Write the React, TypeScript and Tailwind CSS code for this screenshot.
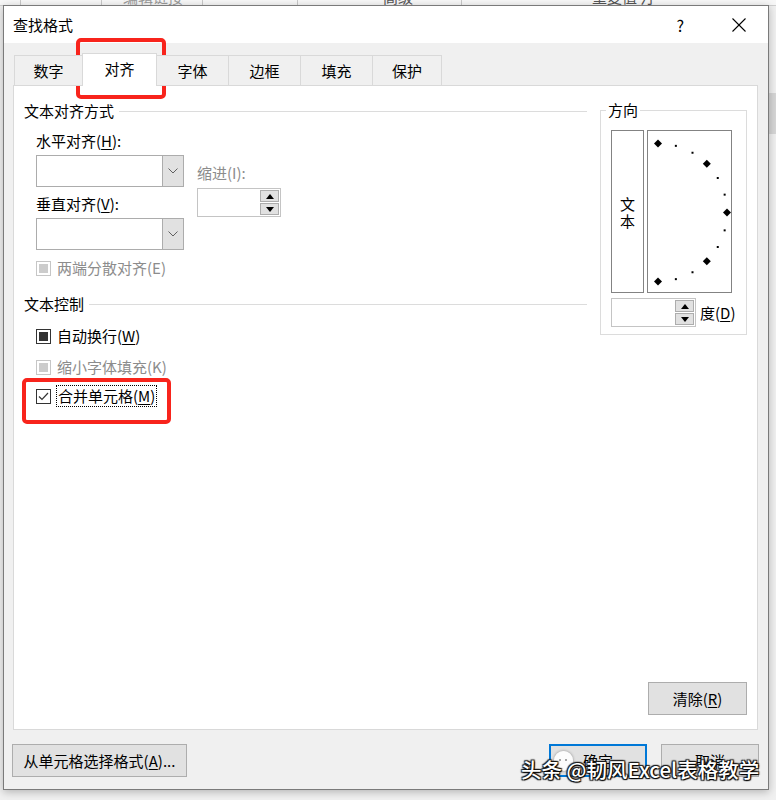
import React from "react";

const FONT = "font-['Noto_Sans_CJK_SC','Microsoft_YaHei',sans-serif]";

function Chevron() {
  return (
    <svg width="10" height="6" viewBox="0 0 10 6">
      <polyline points="0.5,0.5 5,5 9.5,0.5" fill="none" stroke="#606060" strokeWidth="1" />
    </svg>
  );
}

function Combo() {
  return (
    <div className="flex h-[32px] w-[148px] border border-[#acacac] bg-white">
      <div className="flex-1" />
      <div className="flex w-[21px] items-center justify-center border-l border-[#acacac] bg-[#e1e1e1]">
        <Chevron />
      </div>
    </div>
  );
}

function Tri({ up }: { up: boolean }) {
  return (
    <svg width="8" height="5" viewBox="0 0 8 5">
      <polygon points={up ? "4,0 8,5 0,5" : "0,0 8,0 4,5"} fill="#000" />
    </svg>
  );
}

function Spin({ className }: { className: string }) {
  return (
    <div className={className}>
      <div className="flex-1" />
      <div className="flex w-[19px] flex-col gap-px">
        <div className="flex flex-1 items-center justify-center border border-[#adadad] bg-[#e1e1e1]">
          <Tri up />
        </div>
        <div className="flex flex-1 items-center justify-center border border-[#adadad] bg-[#e1e1e1]">
          <Tri up={false} />
        </div>
      </div>
    </div>
  );
}

function Legend({ text }: { text: string }) {
  return (
    <div className="flex h-[20px] items-center gap-[5px]">
      <span className="text-[15px] leading-[20px] text-black">{text}</span>
      <div className="h-px flex-1 bg-[#dcdcdc]" />
    </div>
  );
}

function Tab({ label, className }: { label: string; className: string }) {
  return (
    <div className={className}>
      <span className="text-[15px] leading-[20px] text-black">{label}</span>
    </div>
  );
}

function Btn({ label, acc, rest, className }: { label: string; acc: string; rest: string; className: string }) {
  return (
    <div className={className}>
      <span className="text-[15px] leading-[20px] text-black">
        {label}(<span className="underline underline-offset-2">{acc}</span>){rest}
      </span>
    </div>
  );
}

const dial = (() => {
  const cx = 10;
  const cy = 81.5;
  const r = 69;
  const pts: { x: number; y: number; big: boolean }[] = [];
  for (let a = 90; a >= -90; a -= 15) {
    const rad = (a * Math.PI) / 180;
    pts.push({ x: cx + r * Math.cos(rad), y: cy - r * Math.sin(rad), big: a % 45 === 0 });
  }
  return pts;
})();

export default function App() {
  return (
    <div className={`relative h-[800px] w-[776px] overflow-hidden bg-[#f0f0f0] ${FONT}`}>
      {/* background excel ribbon strip */}
      <div className="absolute left-0 top-0 h-[6px] w-[776px] border-b border-[#cfcfcf] bg-[#f7f7f7]">
        <div className="absolute left-[20px] top-0 h-[6px] w-px bg-[#c8c8c8]" />
        <div className="absolute left-[101px] top-0 h-[6px] w-px bg-[#c8c8c8]" />
        <div className="absolute left-[202px] top-0 h-[6px] w-px bg-[#c8c8c8]" />
        <div className="absolute left-[297px] top-0 h-[6px] w-px bg-[#c8c8c8]" />
        <div className="absolute left-[461px] top-0 h-[6px] w-px bg-[#c8c8c8]" />
        <span className="absolute left-[123px] top-[-14px] text-[15px] text-[#9a9a9a]">编辑链接</span>
        <span className="absolute left-[383px] top-[-14px] text-[15px] text-[#555]">高级</span>
        <span className="absolute left-[592px] top-[-14px] text-[15px] text-[#555]">重复值 汀</span>
      </div>
      <div className="absolute right-0 top-[93px] h-[41px] w-[8px] bg-[#d6d6d6]" />

      {/* dialog */}
      <div className="absolute left-[3px] top-[5px] flex h-[785px] w-[766px] flex-col border border-[#7a7a7a] bg-[#f0f0f0] shadow-[0_2px_8px_rgba(0,0,0,0.25)]">
        {/* title bar */}
        <div className="flex h-[37px] items-center bg-white pl-[9px]">
          <span className="text-[15px] leading-[20px] text-black">查找格式</span>
          <div className="flex-1" />
          <span className="mr-[48px] text-[16px] leading-[20px] text-black">?</span>
          <svg width="14" height="14" viewBox="0 0 14 14" className="mr-[22px]">
            <line x1="0.5" y1="0.5" x2="13.5" y2="13.5" stroke="#000" strokeWidth="1.1" />
            <line x1="13.5" y1="0.5" x2="0.5" y2="13.5" stroke="#000" strokeWidth="1.1" />
          </svg>
        </div>

        {/* tabs */}
        <div className="relative z-10 -mb-px ml-[10px] mt-[10px] flex h-[33px] items-end">
          <Tab label="数字" className="flex h-[31px] w-[68px] items-center justify-center border-l border-t border-b border-[#d9d9d9] bg-[#f0f0f0]" />
          <Tab label="对齐" className="flex h-[33px] w-[75px] items-center justify-center border-l border-r border-t border-[#d9d9d9] bg-white pb-[2px]" />
          <Tab label="字体" className="flex h-[31px] w-[71px] items-center justify-center border-t border-b border-[#d9d9d9] bg-[#f0f0f0]" />
          <Tab label="边框" className="flex h-[31px] w-[72px] items-center justify-center border-l border-t border-b border-[#d9d9d9] bg-[#f0f0f0]" />
          <Tab label="填充" className="flex h-[31px] w-[72px] items-center justify-center border-l border-t border-b border-[#d9d9d9] bg-[#f0f0f0]" />
          <Tab label="保护" className="flex h-[31px] w-[70px] items-center justify-center border-l border-r border-t border-b border-[#d9d9d9] bg-[#f0f0f0]" />
        </div>

        {/* panel */}
        <div className="ml-[9px] flex h-[645px] w-[745px] flex-col border border-[#d9d9d9] bg-white">
          <div className="flex">
            {/* left column */}
            <div className="flex w-[573px] flex-col pl-[10px] pt-[15px]">
              <Legend text="文本对齐方式" />
              <div className="ml-[12px] flex">
                <div className="flex w-[148px] flex-col">
                  <div className="mt-[10px] h-[20px] text-[15px] leading-[20px] text-black">
                    水平对齐(<span className="underline underline-offset-2">H</span>):
                  </div>
                  <div className="mt-[4px]">
                    <Combo />
                  </div>
                  <div className="mt-[7px] h-[20px] text-[15px] leading-[20px] text-black">
                    垂直对齐(<span className="underline underline-offset-2">V</span>):
                  </div>
                  <div className="mt-[4px]">
                    <Combo />
                  </div>
                </div>
                <div className="ml-[13px] flex flex-col">
                  <div className="mt-[42px] h-[20px] text-[15px] leading-[20px] text-[#8c8c8c]">缩进(I):</div>
                  <Spin className="mt-[5px] flex h-[29px] w-[84px] border border-[#c4c4c4] bg-white p-px" />
                </div>
              </div>
              <div className="ml-[12px] mt-[8px] flex h-[20px] items-center gap-[6px]">
                <div className="flex h-[15px] w-[15px] items-center justify-center border border-[#c6c6c6] bg-white">
                  <div className="h-[9px] w-[9px] bg-[#cccccc]" />
                </div>
                <span className="text-[15px] leading-[20px] text-[#8c8c8c]">两端分散对齐(E)</span>
              </div>

              <div className="mt-[16px]">
                <Legend text="文本控制" />
              </div>
              <div className="ml-[12px] mt-[12px] flex h-[20px] items-center gap-[6px]">
                <div className="flex h-[15px] w-[15px] items-center justify-center border border-[#333] bg-white">
                  <div className="h-[9px] w-[9px] bg-[#333]" />
                </div>
                <span className="text-[15px] leading-[20px] text-black">
                  自动换行(<span className="underline underline-offset-2">W</span>)
                </span>
              </div>
              <div className="ml-[12px] mt-[11px] flex h-[20px] items-center gap-[6px]">
                <div className="flex h-[15px] w-[15px] items-center justify-center border border-[#c6c6c6] bg-white">
                  <div className="h-[9px] w-[9px] bg-[#cccccc]" />
                </div>
                <span className="text-[15px] leading-[20px] text-[#8c8c8c]">缩小字体填充(K)</span>
              </div>
              <div className="ml-[12px] mt-[8px] flex h-[22px] items-center gap-[5px]">
                <div className="flex h-[15px] w-[15px] items-center justify-center border border-[#333] bg-white">
                  <svg width="13" height="13" viewBox="0 0 13 13">
                    <polyline points="2,6.5 5,9.5 11,3" fill="none" stroke="#333" strokeWidth="1.2" />
                  </svg>
                </div>
                <span className="border border-dotted border-black px-px text-[15px] leading-[20px] text-black">
                  合并单元格(<span className="underline underline-offset-2">M</span>)
                </span>
              </div>
            </div>

            {/* right group: 方向 */}
            <div className="relative ml-[13px] mt-[24px] flex h-[225px] w-[147px] flex-col border border-[#dcdcdc] pl-[10px] pt-[19px]">
              <span className="absolute left-[5px] top-[-11px] bg-white px-[2px] text-[15px] leading-[20px] text-black">方向</span>
              <div className="flex gap-[3px]">
                <div className="flex h-[163px] w-[33px] flex-col items-center justify-center border border-[#838383] text-[15px] leading-[17px] text-black">
                  <span>文</span>
                  <span>本</span>
                </div>
                <div className="h-[163px] w-[85px] border border-[#838383]">
                  <svg width="83" height="161" viewBox="0 0 83 161">
                    {dial.map((p, i) =>
                      p.big ? (
                        <polygon
                          key={i}
                          points={`${p.x},${p.y - 4} ${p.x + 4},${p.y} ${p.x},${p.y + 4} ${p.x - 4},${p.y}`}
                          fill="#000"
                        />
                      ) : (
                        <rect key={i} x={p.x - 1} y={p.y - 1} width="2" height="2" fill="#000" />
                      )
                    )}
                  </svg>
                </div>
              </div>
              <div className="mt-[5px] flex items-center gap-[4px]">
                <Spin className="flex h-[29px] w-[85px] border border-[#c4c4c4] bg-white p-px" />
                <span className="text-[15px] leading-[20px] text-black">
                  度(<span className="underline underline-offset-2">D</span>)
                </span>
              </div>
            </div>
          </div>
          <div className="flex-1" />
          <div className="flex justify-end pb-[14px] pr-[10px]">
            <Btn label="清除" acc="R" rest="" className="flex h-[33px] w-[99px] items-center justify-center border border-[#adadad] bg-[#e1e1e1]" />
          </div>
        </div>

        {/* bottom buttons */}
        <div className="mt-[14px] flex h-[33px] pl-[8px] pr-[9px]">
          <Btn label="从单元格选择格式" acc="A" rest="..." className="flex h-[33px] w-[175px] items-center justify-center border border-[#adadad] bg-[#e1e1e1]" />
          <div className="flex-1" />
          <div className="flex h-[33px] w-[98px] items-center justify-center border-2 border-[#0078d7] bg-[#e1e1e1]">
            <span className="text-[15px] leading-[20px] text-black">确定</span>
          </div>
          <div className="ml-[14px] flex h-[33px] w-[98px] items-center justify-center border border-[#adadad] bg-[#e1e1e1]">
            <span className="text-[15px] leading-[20px] text-black">取消</span>
          </div>
        </div>
      </div>

      {/* red highlight boxes */}
      <div className="pointer-events-none absolute left-[76px] top-[38px] h-[61px] w-[90px] rounded-[5px] border-[4px] border-[#f8241c]" />
      <div className="pointer-events-none absolute left-[22px] top-[378px] h-[46px] w-[149px] rounded-[5px] border-[4px] border-[#f8241c]" />

      {/* watermark */}
      <div className="pointer-events-none absolute left-[554px] top-[751px] h-[20px] w-[19px] rounded-full bg-white/90 shadow-[0_0_3px_rgba(0,0,0,0.4)]">
        <div className="absolute left-[5px] top-[8px] h-[2px] w-[2px] rounded-full bg-[#888]" />
        <div className="absolute left-[11px] top-[8px] h-[2px] w-[2px] rounded-full bg-[#888]" />
      </div>
      <div className="pointer-events-none absolute left-[521px] top-[756px] whitespace-nowrap text-[20.5px] font-medium leading-[26px] text-white [text-shadow:0_0_2px_#000,1px_1px_1px_#000,-1px_-1px_1px_#222,1px_-1px_1px_#222,-1px_1px_1px_#222]">
        头条 @韧风Excel表格教学
      </div>
    </div>
  );
}
